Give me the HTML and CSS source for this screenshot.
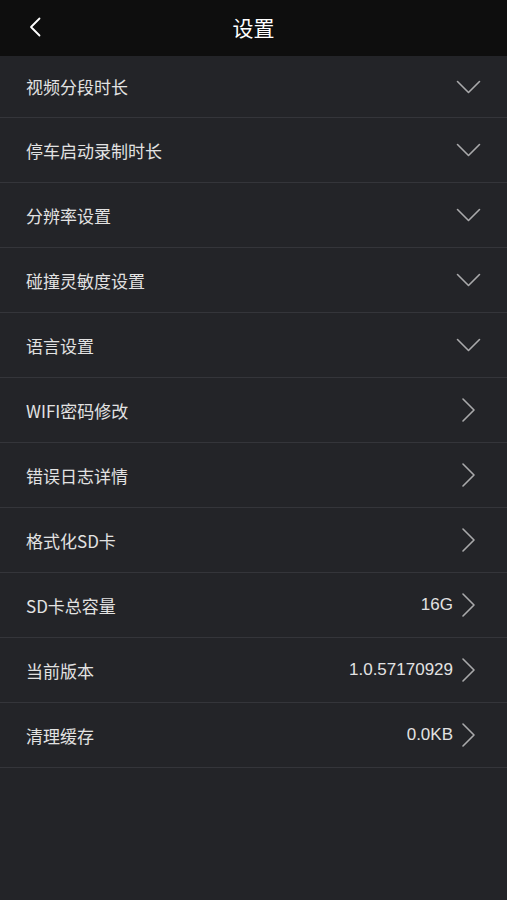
FILE: index.html
```html
<!DOCTYPE html>
<html lang="zh-CN">
<head>
    <meta charset="UTF-8">
    <meta name="viewport" content="width=device-width, initial-scale=1.0">
    <title>设置</title>
    <link rel="stylesheet" href="styles.css">
</head>
<body>
    <div class="header">
        <svg class="back" width="12" height="20" viewBox="0 0 12 20">
            <path d="M10.5 1.5 L2 10 L10.5 18.5" fill="none" stroke="#fff" stroke-width="1.8" stroke-linecap="round" stroke-linejoin="round"/>
        </svg>
        <h1>设置</h1>
    </div>

    <div class="list">
        <div class="row first">
            <span class="label">视频分段时长</span>
            <svg class="down" width="25" height="14" viewBox="0 0 25 14"><path d="M1.5 1.5 L12.5 12.5 L23.5 1.5"/></svg>
        </div>
        <div class="row">
            <span class="label">停车启动录制时长</span>
            <svg class="down" width="25" height="14" viewBox="0 0 25 14"><path d="M1.5 1.5 L12.5 12.5 L23.5 1.5"/></svg>
        </div>
        <div class="row">
            <span class="label">分辨率设置</span>
            <svg class="down" width="25" height="14" viewBox="0 0 25 14"><path d="M1.5 1.5 L12.5 12.5 L23.5 1.5"/></svg>
        </div>
        <div class="row">
            <span class="label">碰撞灵敏度设置</span>
            <svg class="down" width="25" height="14" viewBox="0 0 25 14"><path d="M1.5 1.5 L12.5 12.5 L23.5 1.5"/></svg>
        </div>
        <div class="row">
            <span class="label">语言设置</span>
            <svg class="down" width="25" height="14" viewBox="0 0 25 14"><path d="M1.5 1.5 L12.5 12.5 L23.5 1.5"/></svg>
        </div>
        <div class="row">
            <span class="label">WIFI密码修改</span>
            <svg class="right" width="15" height="24" viewBox="0 0 15 24"><path d="M2 1 L13 12 L2 23"/></svg>
        </div>
        <div class="row">
            <span class="label">错误日志详情</span>
            <svg class="right" width="15" height="24" viewBox="0 0 15 24"><path d="M2 1 L13 12 L2 23"/></svg>
        </div>
        <div class="row">
            <span class="label">格式化SD卡</span>
            <svg class="right" width="15" height="24" viewBox="0 0 15 24"><path d="M2 1 L13 12 L2 23"/></svg>
        </div>
        <div class="row">
            <span class="label">SD卡总容量</span>
            <span class="value">16G</span>
            <svg class="right" width="15" height="24" viewBox="0 0 15 24"><path d="M2 1 L13 12 L2 23"/></svg>
        </div>
        <div class="row">
            <span class="label">当前版本</span>
            <span class="value">1.0.57170929</span>
            <svg class="right" width="15" height="24" viewBox="0 0 15 24"><path d="M2 1 L13 12 L2 23"/></svg>
        </div>
        <div class="row">
            <span class="label">清理缓存</span>
            <span class="value">0.0KB</span>
            <svg class="right" width="15" height="24" viewBox="0 0 15 24"><path d="M2 1 L13 12 L2 23"/></svg>
        </div>
    </div>
</body>
</html>
```

FILE: styles.css
```css
body {
    margin: 0;
    background-color: #232428;
    font-family: "Noto Sans CJK SC", "Noto Sans", sans-serif;
    color: #e2e2e2;
    height: 900px;
}
.header {
    height: 56px;
    background-color: #0e0e0e;
    display: flex;
    align-items: center;
    justify-content: center;
    position: relative;
}
.header h1 {
    margin: 0 0 3px;
    font-size: 21px;
    font-weight: normal;
    color: #fff;
}
.back {
    position: absolute;
    left: 29px;
    top: 17px;
}
.row {
    border-bottom: 1px solid #34353a;
    display: flex;
    align-items: center;
    padding: 0 27px 0 26px;
    box-sizing: border-box;
    height: 65px;
}
.row.first {
    height: 62px;
}
.label {
    flex: 1;
    font-size: 17px;
}
.value {
    font-family: "Liberation Sans", "Noto Sans", sans-serif;
    font-size: 17px;
    color: #e2e2e2;
    margin-right: 8px;
}
.down path,
.right path {
    fill: none;
    stroke: #a9a9ab;
    stroke-width: 1.6;
    stroke-linecap: round;
    stroke-linejoin: round;
}
.down {
    margin-right: -1px;
}
.right {
    margin-right: 4px;
}
```
